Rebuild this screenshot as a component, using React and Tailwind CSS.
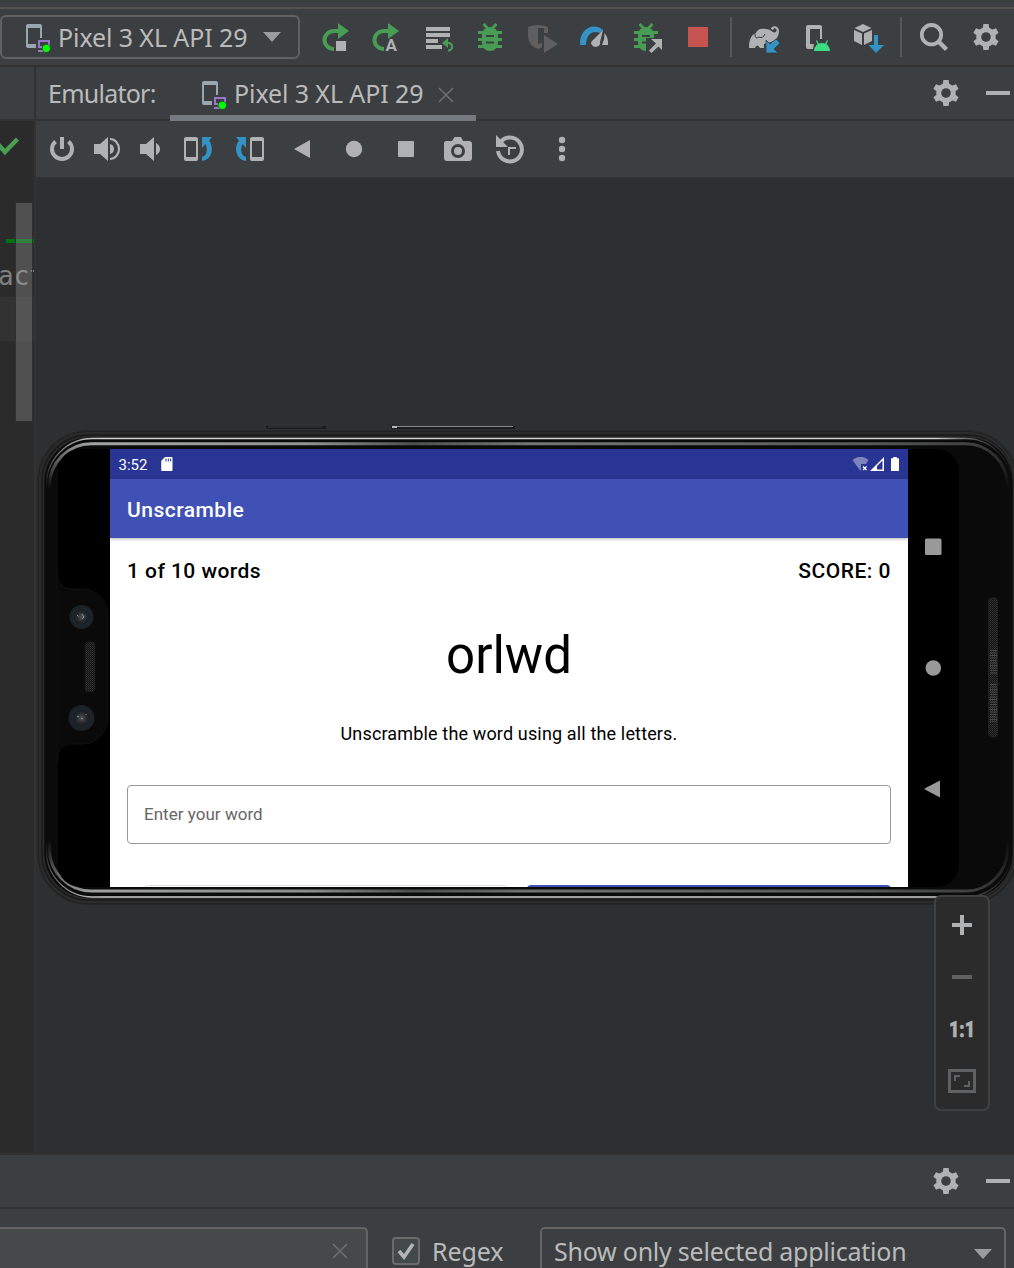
import React from "react";

const GRAY = "#afb1b3";
const GREEN = "#499c54";
const BLUE = "#3592c4";

// Every glyph is drawn in window units; box = [x, y, width, height] selects its cell.
function Glyph({ box, className = "", children }) {
  return (
    <svg
      className={"block shrink-0 " + className}
      width={box[2]}
      height={box[3]}
      viewBox={box.join(" ")}
      fill="none"
      aria-hidden="true"
    >
      {children}
    </svg>
  );
}

function DeviceIcon() {
  return (
    <Glyph box={[0, 0, 28, 32]}>
      <path d="M2 1h12a2 2 0 0 1 2 2v12h-2V5H2v16h8v4H2a2 2 0 0 1-2-2V3a2 2 0 0 1 2-2z" fill="#9aa7b0" />
      <path d="M13 23V18h10v7M12 28h6M12 24h4" stroke="#9876c9" strokeWidth="2" />
      <circle cx="20.3" cy="25.3" r="4.4" fill="#2f5a2f" />
      <circle cx="20.3" cy="25.3" r="3.6" fill="#00ff00" />
    </Glyph>
  );
}

function Gear({ className }) {
  return (
    <Glyph box={[-14, -14, 28, 28]} className={className}>
      <g fill={GRAY}>
        {[0, 60, 120, 180, 240, 300].map((a) => (
          <path key={a} d="M-3.4-8L-2.6-13H2.6L3.4-8z" transform={`rotate(${a})`} />
        ))}
      </g>
      <circle r="7.3" stroke={GRAY} strokeWidth="5" />
    </Glyph>
  );
}

function Minus({ className }) {
  return <span className={"block h-1 w-6 shrink-0 bg-[#afb1b3] " + className} />;
}

function Cross({ className }) {
  return (
    <Glyph box={[0, 0, 16, 16]} className={className}>
      <path d="M1 1l14 14M15 1L1 15" stroke="#6b7073" strokeWidth="1.5" />
    </Glyph>
  );
}

function Bug({ cx }) {
  return (
    <g transform={`translate(${cx} 0)`}>
      <path
        d="M-6.5 24l4 4M6.5 24l-4 4M-12 32.5H12M-12 39.5H12M-12 46.5H12"
        stroke={GREEN}
        strokeWidth="3"
      />
      <path d="M-8 34.5a8 7.5 0 0 1 16 0V43a8 8 0 0 1-16 0z" fill={GREEN} />
      <path d="M-4 36h8M-4 42.5h8" stroke="#3c3f41" strokeWidth="2" />
    </g>
  );
}

function Rerun() {
  return (
    <>
      <path d="M334 49a9.5 9 0 0 1 0-18h5" stroke={GREEN} strokeWidth="4" />
      <path d="M338 23l11 8-11 8z" fill={GREEN} />
    </>
  );
}

function TopBar() {
  return (
    <div className="flex h-[56px] shrink-0 items-start">
      <div className="mt-[6px] flex h-[44px] w-[300px] shrink-0 items-center rounded-[6px] border-2 border-[#5f6163]">
        <div className="ml-[24px] mt-[4px]">
          <DeviceIcon />
        </div>
        <span className="ml-[4px] w-[205px] whitespace-nowrap text-[25px] leading-8 tracking-[-0.1px]">
          Pixel 3 XL API 29
        </span>
        <Glyph box={[0, 0, 18, 10]}>
          <path d="M0 0h18L9 10z" fill="#9a9da0" />
        </Glyph>
      </div>
      <div className="ml-[10px] flex h-full">
        <Glyph box={[310, 9, 51, 56]}>
          <Rerun />
          <path d="M335 40h12v12h-12z" fill="#3c3f41" />
          <path d="M336 41h10v10h-10z" fill={GRAY} />
        </Glyph>
        <Glyph box={[361, 9, 52, 56]}>
          <g transform="translate(50 0)">
            <Rerun />
          </g>
          <text x="385.6" y="51" fontFamily="Roboto" fontWeight="700" fontSize="17" fill={GRAY} stroke="#3c3f41" strokeWidth="2" paintOrder="stroke">
            A
          </text>
        </Glyph>
        <Glyph box={[413, 9, 52, 56]}>
          <path d="M426 27h24v4h-24zM426 33h24v4h-24zM426 39h12v4h-12zM426 45h16v4h-16z" fill={GRAY} />
          <path d="M442 43l6-5v10z" fill={GREEN} />
          <path d="M447 43h2a4 3.8 0 0 1 0 7.4h-1" stroke={GREEN} strokeWidth="2" />
        </Glyph>
        <Glyph box={[465, 9, 51, 56]}>
          <Bug cx={490} />
        </Glyph>
        <Glyph box={[516, 9, 52, 56]}>
          <path d="M528 27q10-4 20 0v6h-4v-5h-6v21q-10-4-10-13z" fill="#5f5f5f" />
          <path d="M538 49l4-2v-4l-4 1z" fill="#5f5f5f" />
          <path d="M544 35l14 9-14 9z" fill="#5f5f5f" />
        </Glyph>
        <Glyph box={[568, 9, 53, 56]}>
          <path d="M580 45C579 28 594 22 603 30L600 33C594 30 586 33 586 45z" fill={BLUE} />
          <path d="M603 30l-3 12a4.4 4 0 0 1-8 3c-1.500-1-1-3 0-4z" fill={GRAY} />
          <path d="M604.500 33q4 5 3.500 12h-6q3-6 2.500-12z" fill={GRAY} />
        </Glyph>
        <Glyph box={[621, 9, 52, 56]}>
          <Bug cx={646} />
          <path d="M646 38h18v16h-18z" fill="#3c3f41" />
          <path d="M662 39v11l-3.500-3.500-7 6.500-2.500-2.500 7-7L651 39z" fill={GRAY} />
        </Glyph>
        <Glyph box={[673, 9, 57, 56]}>
          <path d="M688 27h20v20h-20z" fill="#c75450" />
        </Glyph>
        <span className="mt-2 h-[40px] w-[2px] bg-[#555759]" />
        <Glyph box={[732, 9, 59, 56]}>
          <path
            d="M749 48c0-8 2-13 7-15 1-4 6-5 10-4 5 0 7 5 10 3 1.500-2 0-4.500-2-3.500l-1 1.500-2-1c0-4 8-4 8 2 0 9-8 11-8 11L764 44v4h-4q-3-5-5 0z"
            fill={GRAY}
          />
          <path d="M755 34q0 6 4 3 4 2 6-3" stroke="#3c3f41" strokeWidth="1" />
          <path d="M766 40v13h12l-4-4 6-6-4-4-6 5z" fill={BLUE} stroke="#3c3f41" strokeWidth="0.800" />
        </Glyph>
        <Glyph box={[791, 9, 52, 56]}>
          <path d="M808 25h12a2 2 0 0 1 2 2v12h-2V29h-10v15h4l-1 5h-5a2 2 0 0 1-2-2V27a2 2 0 0 1 2-2z" fill={GRAY} />
          <path d="M814 51q1-8 8-8t8 8z" fill="#3ddc84" />
          <path d="M816.500 40.500l2 4M827.500 40.500l-2 4" stroke="#3ddc84" strokeWidth="1.300" />
        </Glyph>
        <Glyph box={[843, 9, 57, 56]}>
          <path d="M863 24l8.500 4-8.500 4-8.500-4zM854 30l8 3.600V45l-8-4zM872 30l-8 3.600V45l8-4z" fill={GRAY} />
          <path d="M873 34h6v11h6l-9 9-9-9h6z" fill="#3c3f41" />
          <path d="M874 35h4v10h6l-8 8-7.500-8h5.500z" fill={BLUE} />
        </Glyph>
        <span className="mt-2 h-[40px] w-[2px] bg-[#555759]" />
        <Glyph box={[902, 9, 60, 56]}>
          <circle cx="931.500" cy="34.700" r="9.700" stroke={GRAY} strokeWidth="3.800" />
          <path d="M938.500 41.500l8 8" stroke={GRAY} strokeWidth="4.500" />
        </Glyph>
        <Gear className="ml-[10px] mt-[14px]" />
      </div>
    </div>
  );
}

function EmulatorTabs() {
  return (
    <div className="flex h-[52px] grow items-start">
      <span className="ml-[12px] mt-[10px] w-[122px] whitespace-nowrap text-[25px] leading-8 tracking-[-0.75px]">
        Emulator:
      </span>
      <div className="z-10 flex h-[54px] w-[306px] items-start border-b-[6px] border-[#747a80]">
        <div className="ml-[32px] mt-[13px]">
          <DeviceIcon />
        </div>
        <span className="ml-[4px] mt-[10px] w-[204px] whitespace-nowrap text-[25px] leading-8 tracking-[-0.1px]">
          Pixel 3 XL API 29
        </span>
        <Cross className="mt-[20px]" />
      </div>
      <Gear className="ml-auto mt-[12px]" />
      <Minus className="ml-[26px] mr-[4px] mt-[24px]" />
    </div>
  );
}

function EmulatorToolbar() {
  return (
    <div className="flex h-[56px] shrink-0">
      <Glyph box={[36, 121, 51, 56]}>
        <path d="M55.500 141.500a10 10 0 1 0 13 0" stroke={GRAY} strokeWidth="4" />
        <path d="M60 137h4v12h-4z" fill={GRAY} />
      </Glyph>
      <Glyph box={[87, 121, 45, 56]}>
        <path d="M94 144h6l8-7v24l-8-7h-6z" fill={GRAY} />
        <path d="M110 144q4 1 4 5t-4 5z" fill={GRAY} />
        <path d="M110 139a9 10 0 0 1 0 20" stroke={GRAY} strokeWidth="2.200" />
      </Glyph>
      <Glyph box={[132, 121, 41, 56]}>
        <path d="M140 144h6l8-7v24l-8-7h-6zM156 143q4 2 4 6t-4 6z" fill={GRAY} />
      </Glyph>
      <Glyph box={[173, 121, 52, 56]}>
        <path fillRule="evenodd" d="M186 137h10a2 2 0 0 1 2 2v20a2 2 0 0 1-2 2h-10a2 2 0 0 1-2-2v-20a2 2 0 0 1 2-2zm0 4v16h10v-16z" fill={GRAY} />
        <path d="M202 137h10l-3 3.500c5 6 4 19-7 20.500v-4c5-1 6-8 3.500-13l-3.500 4z" fill={BLUE} />
      </Glyph>
      <Glyph box={[225, 121, 52, 56]}>
        <path d="M246 137h-10l3 3.500c-5 6-4 19 7 20.500v-4c-5-1-6-8-3.500-13l3.500 4z" fill={BLUE} />
        <path fillRule="evenodd" d="M252 137h10a2 2 0 0 1 2 2v20a2 2 0 0 1-2 2h-10a2 2 0 0 1-2-2v-20a2 2 0 0 1 2-2zm0 4v16h10v-16z" fill={GRAY} />
      </Glyph>
      <Glyph box={[277, 121, 51, 56]}>
        <path d="M310 140v18l-16-9z" fill={GRAY} />
      </Glyph>
      <Glyph box={[328, 121, 52, 56]}>
        <circle cx="354" cy="149" r="8.200" fill={GRAY} />
      </Glyph>
      <Glyph box={[380, 121, 52, 56]}>
        <rect x="398" y="141" width="16" height="16" rx="1" fill={GRAY} />
      </Glyph>
      <Glyph box={[432, 121, 52, 56]}>
        <path d="M446 141h6l2-3q0-1 1-1h6l2 4h6q3 0 3 3v14q0 3-3 3h-22q-3 0-3-3v-14q0-3 2-3z" fill={GRAY} />
        <circle cx="458" cy="151" r="5.500" fill={GRAY} stroke="#3c3f41" strokeWidth="3" />
      </Glyph>
      <Glyph box={[484, 121, 52, 56]}>
        <path d="M500.500 142a12 12 0 1 1-2.500 9" stroke={GRAY} strokeWidth="4" />
        <path d="M496 135v12h12z" fill={GRAY} />
        <path d="M509 155v-7h7" stroke={GRAY} strokeWidth="2" />
      </Glyph>
      <Glyph box={[536, 121, 52, 56]}>
        <g fill={GRAY}>
          <circle cx="562" cy="140" r="3.200" />
          <circle cx="562" cy="149" r="3.200" />
          <circle cx="562" cy="158" r="3.200" />
        </g>
      </Glyph>
    </div>
  );
}

function EditorStrip() {
  return (
    <div className="w-[34px] shrink-0 overflow-hidden">
      <div className="h-[52px] bg-[#3c3f41]" />
      <div className="relative h-[1034px] border-t-2 border-[#323232] bg-[#2b2b2b]">
        <Glyph box={[0, 121, 34, 60]}>
          <path d="M-3 143l8 9 12.500-13" stroke={GREEN} strokeWidth="4.500" />
        </Glyph>
        <div className="ml-[6px] mt-[58px] h-[4px] bg-[#007216]" />
        <div className="mt-[15px] h-[39px] font-['DejaVu_Sans_Mono'] text-[26px] leading-[36px] text-[#808080]">
          <span className="-ml-[2px]">act</span>
        </div>
        <div className="h-[44px] bg-[#323232]" />
        <div className="absolute left-[15px] top-[81px] h-[220px] w-[18px] border border-[#303030] bg-[#a6a6a6]/30" />
      </div>
    </div>
  );
}

// Bezel, camera cut-out and speaker grilles of the landscape handset.
function Handset() {
  return (
    <svg className="absolute left-0 top-[245px]" width="978" height="486" viewBox="36 424 978 486" fill="none" aria-hidden="true">
      <defs>
        <linearGradient id="edge" x1="46" x2="1012" y1="0" y2="0" gradientUnits="userSpaceOnUse">
          <stop offset="0" stopColor="#777" />
          <stop offset="0.060" stopColor="#d6d8d7" />
          <stop offset="0.920" stopColor="#d6d8d7" />
          <stop offset="0.960" stopColor="#555" />
          <stop offset="1" stopColor="#161616" />
        </linearGradient>
        <linearGradient id="rim" x1="46" x2="1012" y1="0" y2="0" gradientUnits="userSpaceOnUse">
          <stop offset="0" stopColor="#8a8c8c" />
          <stop offset="0.050" stopColor="#b4b6b5" />
          <stop offset="0.270" stopColor="#a0a3a2" />
          <stop offset="0.380" stopColor="#555857" />
          <stop offset="0.500" stopColor="#7f8281" />
          <stop offset="0.850" stopColor="#606362" />
          <stop offset="1" stopColor="#3a3a3a" />
        </linearGradient>
        <linearGradient id="fade" x1="0" x2="0" y1="438" y2="900" gradientUnits="userSpaceOnUse">
          <stop offset="0" stopColor="#fff" />
          <stop offset="0.050" stopColor="#999" />
          <stop offset="0.110" stopColor="#000" />
          <stop offset="0.870" stopColor="#000" />
          <stop offset="0.940" stopColor="#999" />
          <stop offset="1" stopColor="#fff" />
        </linearGradient>
        <mask id="ends" maskUnits="userSpaceOnUse" x="36" y="424" width="990" height="486">
          <rect x="36" y="424" width="990" height="486" fill="url(#fade)" />
        </mask>
        <pattern id="mesh" width="2" height="2" patternUnits="userSpaceOnUse">
          <rect width="2" height="2" fill="#111" />
          <rect width="1" height="1" fill="#383838" />
          <rect x="1" y="1" width="1" height="1" fill="#2c2c2c" />
        </pattern>
        <radialGradient id="lens">
          <stop offset="0" stopColor="#50555a" />
          <stop offset="0.350" stopColor="#2a2d30" />
          <stop offset="0.600" stopColor="#1b1d1f" />
          <stop offset="0.700" stopColor="#1e262c" />
          <stop offset="1" stopColor="#182026" />
        </radialGradient>
      </defs>
      <path d="M266 427.500h60" stroke="#1c1c1c" strokeWidth="3" />
      <path d="M268 427h54" stroke="#383838" strokeWidth="1" />
      <path d="M391 427.500h124" stroke="#1b1b1b" strokeWidth="3" />
      <path d="M393 426.500h120" stroke="#8c8c8c" strokeWidth="1" />
      <path d="M392 427h5" stroke="#b8b8b8" strokeWidth="2" />
      <rect x="37.500" y="430.500" width="980" height="474" rx="50" fill="#222" stroke="#272727" />
      <rect x="40" y="433" width="975" height="469" rx="48" fill="#1d1d1d" stroke="#2c2c2c" strokeWidth="2" />
      <rect x="43.500" y="437" width="970" height="461.500" rx="45" fill="#0b0b0b" stroke="#2a2a2a" strokeWidth="1.500" />
      <g mask="url(#ends)">
        <rect x="46.500" y="438.500" width="965" height="458.500" rx="46" fill="#0b0b0b" stroke="url(#edge)" strokeWidth="1.300" />
        <rect x="49.500" y="443.800" width="958" height="447.200" rx="42" fill="#0b0b0b" stroke="url(#rim)" strokeWidth="3" />
      </g>
      <rect x="51.500" y="446" width="954" height="443" rx="40" fill="#0a0a0a" />
      <rect x="58" y="449" width="901" height="438" rx="22" fill="#000" />
      <path d="M57 570c0 14 6 19 16 19h10c14 0 25 12 25 26v103c0 14-11 26-25 26h-10c-10 0-16 5-16 19z" fill="#0a0a0a" stroke="#101010" />
      <circle cx="81.500" cy="617" r="12" fill="url(#lens)" />
      <circle cx="81.500" cy="718" r="13" fill="url(#lens)" />
      <path d="M77 615l1.500 1.500M82 614l2 3-2 2M77 716l2 1M81 718l2 1M86 714v1" stroke="#8b9298" strokeWidth="1" />
      <rect x="85" y="642" width="10" height="50" rx="3" fill="url(#mesh)" stroke="#171717" />
      <rect x="988.500" y="598" width="9" height="139" rx="3" fill="url(#mesh)" stroke="#202020" />
      <path d="M993.500 650v25M993.500 684v38" stroke="#484848" strokeWidth="7" strokeDasharray="1 1.500" />
    </svg>
  );
}

function AppScreen() {
  return (
    <div className="absolute left-[74px] top-[270px] flex h-[438px] w-[798px] flex-col overflow-hidden bg-white font-[Roboto] text-black">
      <div className="flex h-[30px] shrink-0 items-center bg-[#283593] text-white">
        <span className="ml-[8.500px] mt-[2px] w-[42.500px] text-[15px] leading-[28px]">3:52</span>
        <Glyph box={[0, 0, 12, 14]}>
          <path d="M4 0h6.500q1 0 1 1v12q0 1-1 1H1.200q-1 0-1-1V4z" fill="#fff" />
          <path d="M5 1.500v3M7.300 1.500v3M9.600 1.500v3" stroke="#283593" strokeWidth="1" />
        </Glyph>
        <Glyph box={[852, 457, 48, 16]} className="ml-auto mr-[8px] mt-[2px]">
          <path d="M852.500 460q8-6.500 16 0l-2.500 4h-5v6.500h-1z" fill="#7c83bd" />
          <path d="M863 466.500l3.500 3.500M866.500 466.500l-3.500 3.500" stroke="#fff" strokeWidth="1.300" />
          <path fillRule="evenodd" d="M870 471l14-14v14zm7-1.500h5.500v-9l-5.500 5.500z" fill="#fff" />
          <path d="M891 458.300h2.200V457h3.600v1.300h2.200V471h-8z" fill="#fff" />
        </Glyph>
      </div>
      <div className="z-10 flex h-[59px] shrink-0 items-center bg-[#3f51b5] pl-[17px] text-[21px] font-medium tracking-[0.5px] text-white shadow-[0_1px_3px_rgba(0,0,0,0.3)]">
        <span className="mt-[4px]">Unscramble</span>
      </div>
      <div className="flex grow flex-col px-[17px]">
        <div className="mt-[18px] flex h-[32px] items-center justify-between text-[21px] font-medium">
          <span className="tracking-[0.45px]">1 of 10 words</span>
          <span className="tracking-[0.5px]">SCORE: 0</span>
        </div>
        <div className="mt-[38px] text-center text-[51px] leading-[60px]">orlwd</div>
        <div className="mt-[36px] text-center text-[18px] leading-6 tracking-[0.15px]">
          Unscramble the word using all the letters.
        </div>
        <div className="mt-[39px] flex h-[59px] w-[764px] shrink-0 items-center rounded-[4px] border border-[#999] pl-[16px] text-[17px] tracking-[0.03px] text-[#666]">
          Enter your word
        </div>
        <div className="mt-[41px] flex justify-between">
          <div className="ml-[17px] h-[36px] w-[364px] rounded-[4px] border border-[#dedede]" />
          <div className="h-[36px] w-[364px] rounded-[4px] bg-[#3f51b5]" />
        </div>
      </div>
    </div>
  );
}

function SystemButtons() {
  return (
    <Glyph box={[908, 530, 50, 280]} className="absolute left-[872px] top-[351px]">
      <rect x="925" y="538.500" width="16.500" height="16.500" rx="1.500" fill="#999" />
      <circle cx="933.300" cy="668" r="7.800" fill="#999" />
      <path d="M940 780.500v17l-15-8q-1-.700 0-1.200z" fill="#999" />
    </Glyph>
  );
}

function ZoomPanel() {
  return (
    <div className="absolute left-[898px] top-[716px] flex h-[216px] w-[56px] flex-col items-center rounded-[7px] border-2 border-[#3f4042] bg-[#2b2b2b]">
      <Glyph box={[-10, -10, 20, 20]} className="mt-[18px]">
        <path d="M-10 0h20M0-10v20" stroke={GRAY} strokeWidth="4" />
      </Glyph>
      <span className="mt-[40px] h-1 w-5 shrink-0 bg-[#5f6163]" />
      <svg className="mt-[32px] block shrink-0" width="40" height="36" viewBox="0 0 40 36" aria-label="1:1">
        <text x="7" y="25.500" textLength="26" lengthAdjust="spacingAndGlyphs" fontFamily="Roboto" fontWeight="900" fontSize="22.500" fill={GRAY} stroke={GRAY} strokeWidth="0.600">
          1:1
        </text>
      </svg>
      <Glyph box={[0, 0, 28, 24]} className="mt-[22px]">
        <path d="M1.500 1.500h25v21h-25z" stroke="#5f6163" strokeWidth="3" />
        <path d="M7 12V7h5M21 12v5h-5" stroke="#5f6163" strokeWidth="2" />
      </Glyph>
    </div>
  );
}

function FilterPanel() {
  return (
    <>
      <div className="flex h-[54px] shrink-0 items-center border-b-2 border-[#323232]">
        <Gear className="ml-auto" />
        <Minus className="ml-[26px] mr-[4px]" />
      </div>
      <div className="flex h-[59px] shrink-0 items-start overflow-hidden">
        <div className="mt-[18px] flex h-[50px] w-[368px] shrink-0 justify-end rounded-tr-[5px] border-r-2 border-t-2 border-[#646464] bg-[#45494a]">
          <Cross className="mr-[18px] mt-[14px]" />
        </div>
        <div className="ml-[24px] mt-[28px] flex h-[28px] w-[28px] shrink-0 items-center justify-center rounded-[4px] border-2 border-[#6b6b6b] bg-[#43494a]">
          <Glyph box={[0, 0, 20, 20]}>
            <path d="M3 10l5 6L17 3" stroke="#b4b4b4" strokeWidth="3.600" />
          </Glyph>
        </div>
        <span className="ml-[12px] mt-[26px] w-[108px] text-[25px] leading-8 tracking-[-0.1px]">Regex</span>
        <div className="mt-[18px] flex h-[50px] w-[466px] shrink-0 items-start rounded-[5px] border-2 border-[#646464]">
          <span className="ml-[12px] mt-[6px] w-[420px] whitespace-nowrap text-[25px] leading-8 tracking-[-0.24px]">
            Show only selected application
          </span>
          <Glyph box={[0, 0, 18, 10]} className="mt-[20px]">
            <path d="M0 0h18L9 10z" fill="#9a9da0" />
          </Glyph>
        </div>
      </div>
    </>
  );
}

export default function App() {
  return (
    <div className="flex h-[1268px] w-[1014px] flex-col overflow-hidden bg-[#3c3f41] font-['Noto_Sans',sans-serif] text-[#bbbbbb]">
      <div className="h-[9px] shrink-0 border-b-2 border-[#555350]" />
      <TopBar />
      <div className="flex h-[1090px] shrink-0 border-y-2 border-[#323232]">
        <EditorStrip />
        <div className="flex w-[980px] flex-col border-l-2 border-[#323232]">
          <div className="flex h-[54px] shrink-0 border-b-2 border-[#323232]">
            <EmulatorTabs />
          </div>
          <EmulatorToolbar />
          <div className="h-[2px] shrink-0 bg-[#323232]" />
          <div className="relative grow bg-[#2e2f31]">
            <Handset />
            <AppScreen />
            <SystemButtons />
            <ZoomPanel />
          </div>
        </div>
      </div>
      <FilterPanel />
    </div>
  );
}
